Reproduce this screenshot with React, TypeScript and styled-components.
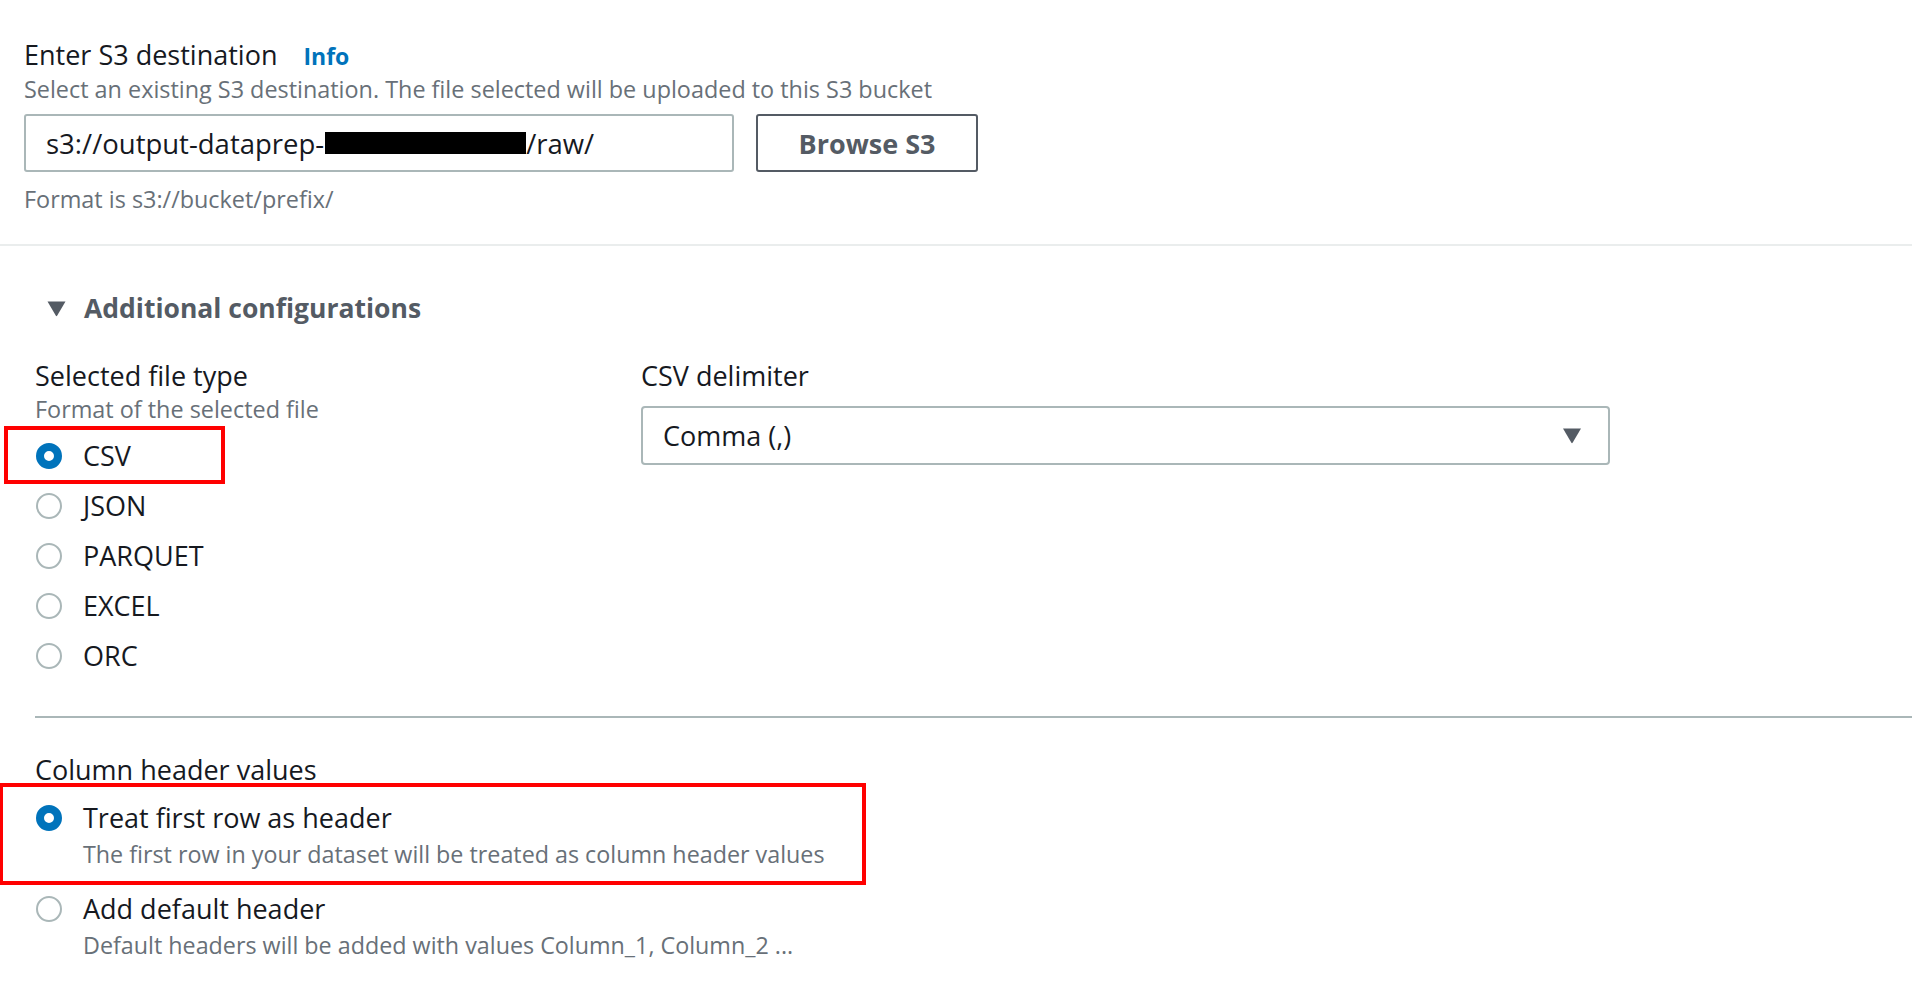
import { createGlobalStyle, styled } from 'styled-components'

const GlobalStyle = createGlobalStyle`
  html, body {
    margin: 0;
    padding: 0;
    background: #ffffff;
  }
  body {
    font-family: "Open Sans", "Noto Sans", sans-serif;
    color: #16191f;
  }
`

const Page = styled.div`
  width: 1912px;
  min-height: 994px;
  background: #fff;
  overflow: hidden;
`

const TopSection = styled.section`
  padding: 39px 24px 31px;
  border-bottom: 2px solid #eaeded;
`

const LabelRow = styled.div`
  display: flex;
  align-items: baseline;
  gap: 26px;
`

const Label = styled.div`
  font-size: 27px;
  line-height: 32px;
  color: #16191f;
`

const InfoLink = styled.a`
  font-size: 23px;
  font-weight: 700;
  color: #0073bb;
  text-decoration: none;
`

const Description = styled.div`
  margin-top: 3px;
  font-size: 23.4px;
  line-height: 28px;
  color: #687078;
`

const InputRow = styled.div`
  display: flex;
  gap: 22px;
  margin-top: 11px;
`

const TextInput = styled.div`
  box-sizing: border-box;
  width: 710px;
  height: 58px;
  border: 2px solid #aab7b8;
  border-radius: 3px;
  padding: 0 20px;
  display: flex;
  align-items: center;
  font-size: 27.5px;
  color: #16191f;
  white-space: nowrap;
`

const Redacted = styled.span`
  display: inline-block;
  width: 201px;
  height: 22px;
  margin-left: 1px;
  background: #000;
`

const BrowseButton = styled.button`
  box-sizing: border-box;
  width: 222px;
  height: 58px;
  border: 2px solid #545b64;
  border-radius: 3px;
  background: #fff;
  font-family: inherit;
  font-size: 27px;
  font-weight: 700;
  color: #545b64;
`

const Constraint = styled(Description)`
  margin-top: 13px;
`

const Expander = styled.div`
  display: flex;
  align-items: center;
  gap: 17px;
  margin: 46px 0 0 46px;
  font-size: 26.5px;
  line-height: 32px;
  font-weight: 700;
  color: #545b64;
`

const Body = styled.div`
  padding-left: 35px;
  margin-top: 36px;
`

const Columns = styled.div`
  display: grid;
  grid-template-columns: 576px 969px;
  column-gap: 30px;
  align-items: start;
`

const Column = styled.div`
  display: flex;
  flex-direction: column;
`

const RadioList = styled.div<{ $gap: number; $top: number }>`
  display: flex;
  flex-direction: column;
  align-items: flex-start;
  gap: ${({ $gap }) => $gap}px;
  margin-top: ${({ $top }) => $top}px;
`

const RadioRow = styled.label`
  display: grid;
  grid-template-columns: 26px auto;
  column-gap: 22px;
  align-items: center;
  justify-content: start;
  min-height: 50px;
`

const Circle = styled.span<{ $checked?: boolean }>`
  box-sizing: border-box;
  width: 26px;
  height: 26px;
  margin-left: 1px;
  border-radius: 50%;
  background: #fff;
  border: ${({ $checked }) => ($checked ? '8px solid #0073bb' : '2px solid #aab7b8')};
`

const RadioLabel = styled.span`
  font-size: 27px;
  line-height: 32px;
  color: #16191f;
`

const RadioDesc = styled.span`
  grid-column: 2;
  font-size: 23.3px;
  line-height: 28px;
  color: #687078;
  margin-top: 6px;
`

const Highlight = styled.div<{ $inset: string }>`
  position: relative;
  &::after {
    content: '';
    position: absolute;
    inset: ${({ $inset }) => $inset};
    border: 4px solid #ff0000;
    pointer-events: none;
  }
`

const Select = styled.div`
  box-sizing: border-box;
  margin-top: 14px;
  height: 59px;
  border: 2px solid #aab7b8;
  border-radius: 4px;
  padding: 0 26px 0 20px;
  display: flex;
  align-items: center;
  justify-content: space-between;
  font-size: 27px;
  color: #16191f;
`

const Divider = styled.hr`
  margin: 35px 0 0;
  border: none;
  border-top: 2px solid #aab7b8;
`

const HeaderSection = styled.div`
  margin-top: 36px;
`

const Caret = ({ w, h }: { w: number; h: number }) => (
  <svg width={w} height={h} viewBox="0 0 20 17" aria-hidden>
    <path d="M1 1.5 H19 L10.6 15.8 Q10 16.6 9.4 15.8 Z" fill="#545b64" />
  </svg>
)

const fileTypes = ['CSV', 'JSON', 'PARQUET', 'EXCEL', 'ORC']

export default function App() {
  return (
    <Page>
      <GlobalStyle />
      <TopSection>
        <LabelRow>
          <Label>Enter S3 destination</Label>
          <InfoLink href="#">Info</InfoLink>
        </LabelRow>
        <Description>Select an existing S3 destination. The file selected will be uploaded to this S3 bucket</Description>
        <InputRow>
          <TextInput>
            s3://output-dataprep-<Redacted />/raw/
          </TextInput>
          <BrowseButton>Browse S3</BrowseButton>
        </InputRow>
        <Constraint>Format is s3://bucket/prefix/</Constraint>
      </TopSection>

      <Expander>
        <Caret w={21} h={17} />
        Additional configurations
      </Expander>

      <Body>
        <Columns>
          <Column>
            <Label>Selected file type</Label>
            <Description>Format of the selected file</Description>
            <RadioList $gap={0} $top={8}>
              {fileTypes.map((t, i) =>
                i === 0 ? (
                  <Highlight key={t} $inset="-5px -94px -3px -31px">
                    <RadioRow>
                      <Circle $checked />
                      <RadioLabel>{t}</RadioLabel>
                    </RadioRow>
                  </Highlight>
                ) : (
                  <RadioRow key={t}>
                    <Circle />
                    <RadioLabel>{t}</RadioLabel>
                  </RadioRow>
                )
              )}
            </RadioList>
          </Column>
          <Column>
            <Label>CSV delimiter</Label>
            <Select>
              Comma (,)
              <Caret w={20} h={17} />
            </Select>
          </Column>
        </Columns>

        <Divider />

        <HeaderSection>
          <Label>Column header values</Label>
          <RadioList $gap={25} $top={16}>
            <Highlight $inset="-19px -41px -17px -36px">
              <RadioRow>
                <Circle $checked />
                <RadioLabel>Treat first row as header</RadioLabel>
                <RadioDesc>The first row in your dataset will be treated as column header values</RadioDesc>
              </RadioRow>
            </Highlight>
            <RadioRow>
              <Circle />
              <RadioLabel>Add default header</RadioLabel>
              <RadioDesc>Default headers will be added with values Column_1, Column_2 ...</RadioDesc>
            </RadioRow>
          </RadioList>
        </HeaderSection>
      </Body>
    </Page>
  )
}
